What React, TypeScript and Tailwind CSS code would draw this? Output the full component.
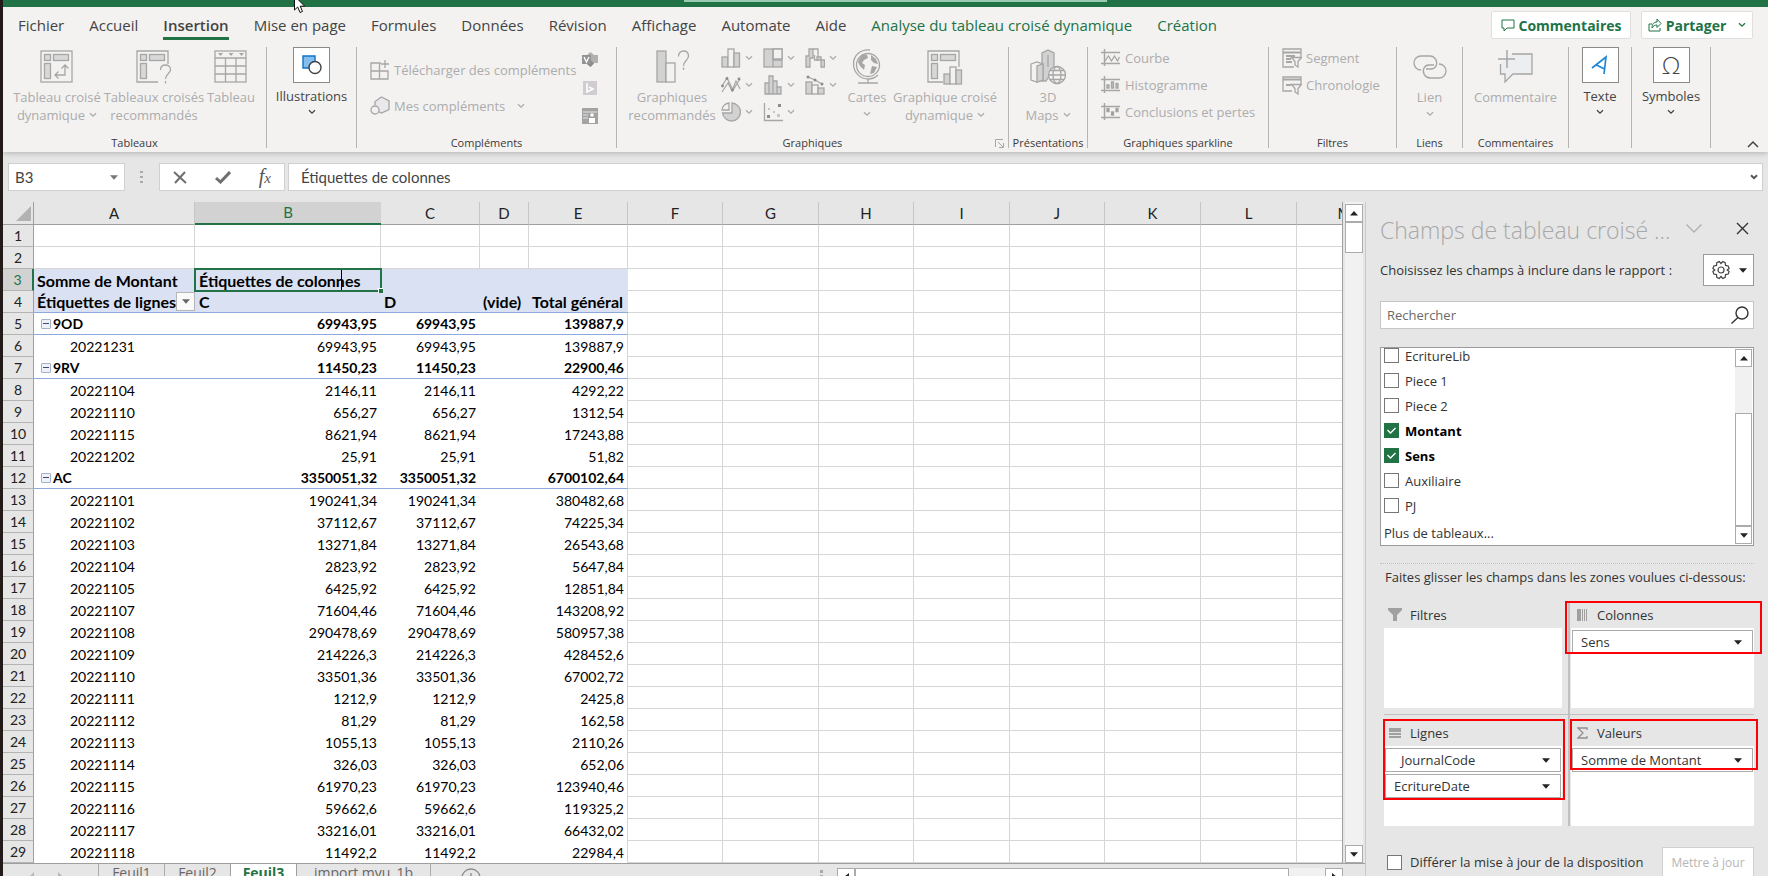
import React, { useState } from 'react';

interface PivotRow {
  label: string;
  values: string[];
  group?: boolean;
}

const tabs = [
  'Fichier', 'Accueil', 'Insertion', 'Mise en page', 'Formules', 'Données',
  'Révision', 'Affichage', 'Automate', 'Aide',
];

const contextTabs = ['Analyse du tableau croisé dynamique', 'Création'];

const columns = ['A', 'B', 'C', 'D', 'E', 'F', 'G', 'H', 'I', 'J', 'K', 'L', 'M'];
const emptyColumns = columns.slice(5);

const colWidths = [
  'w-[31px]', 'w-[161px]', 'w-[186px]', 'w-[99px]', 'w-[49px]', 'w-[99px]', 'w-[95px]',
  'w-[96px]', 'w-[95px]', 'w-[96px]', 'w-[95px]', 'w-[96px]', 'w-[96px]', 'w-[96px]',
];

const pivotRows: PivotRow[] = [
  { label: '9OD', values: ['69943,95', '69943,95', '', '139887,9'], group: true },
  { label: '20221231', values: ['69943,95', '69943,95', '', '139887,9'] },
  { label: '9RV', values: ['11450,23', '11450,23', '', '22900,46'], group: true },
  { label: '20221104', values: ['2146,11', '2146,11', '', '4292,22'] },
  { label: '20221110', values: ['656,27', '656,27', '', '1312,54'] },
  { label: '20221115', values: ['8621,94', '8621,94', '', '17243,88'] },
  { label: '20221202', values: ['25,91', '25,91', '', '51,82'] },
  { label: 'AC', values: ['3350051,32', '3350051,32', '', '6700102,64'], group: true },
  { label: '20221101', values: ['190241,34', '190241,34', '', '380482,68'] },
  { label: '20221102', values: ['37112,67', '37112,67', '', '74225,34'] },
  { label: '20221103', values: ['13271,84', '13271,84', '', '26543,68'] },
  { label: '20221104', values: ['2823,92', '2823,92', '', '5647,84'] },
  { label: '20221105', values: ['6425,92', '6425,92', '', '12851,84'] },
  { label: '20221107', values: ['71604,46', '71604,46', '', '143208,92'] },
  { label: '20221108', values: ['290478,69', '290478,69', '', '580957,38'] },
  { label: '20221109', values: ['214226,3', '214226,3', '', '428452,6'] },
  { label: '20221110', values: ['33501,36', '33501,36', '', '67002,72'] },
  { label: '20221111', values: ['1212,9', '1212,9', '', '2425,8'] },
  { label: '20221112', values: ['81,29', '81,29', '', '162,58'] },
  { label: '20221113', values: ['1055,13', '1055,13', '', '2110,26'] },
  { label: '20221114', values: ['326,03', '326,03', '', '652,06'] },
  { label: '20221115', values: ['61970,23', '61970,23', '', '123940,46'] },
  { label: '20221116', values: ['59662,6', '59662,6', '', '119325,2'] },
  { label: '20221117', values: ['33216,01', '33216,01', '', '66432,02'] },
  { label: '20221118', values: ['11492,2', '11492,2', '', '22984,4'] },
];

/* ---------- small glyphs ---------- */

const Chevron = ({ className = '' }: { className?: string }) => (
  <svg viewBox="0 0 8 6" className={`inline-block h-[6px] w-2 shrink-0 ${className}`} fill="none" stroke="currentColor" strokeWidth="1.3">
    <path d="M1 1.2 4 4.2 7 1.2" />
  </svg>
);

const Triangle = ({ up = false, className = '' }: { up?: boolean; className?: string }) => (
  <svg viewBox="0 0 8 5" className={`h-[5px] w-2 shrink-0 ${className}`} fill="currentColor">
    {up ? <path d="M4 0 8 4.5H0Z" /> : <path d="M0 .3h8L4 4.8Z" />}
  </svg>
);

/* ---------- ribbon icons ---------- */

const svgProps = { fill: 'none', stroke: '#a6a6a6', strokeWidth: 1.3 };

const PivotIcon = () => (
  <svg viewBox="0 0 34 34" className="h-[34px] w-[34px]" {...svgProps}>
    <rect x="1" y="1" width="31" height="31" />
    <rect x="4.500" y="4.500" width="6" height="6" fill="#d8d8d8" />
    <rect x="13.500" y="4.500" width="15" height="6" fill="#d8d8d8" />
    <rect x="4.500" y="13.500" width="6" height="15" fill="#d8d8d8" />
    <path d="M15 25h10V15M18.500 21.500 15 25l3.500 3.500M21.500 18.500 25 15l3.500 3.500" />
  </svg>
);

const PivotHelpIcon = () => (
  <svg viewBox="0 0 36 36" className="h-9 w-9" {...svgProps}>
    <path d="M22 33H1V2h31v13" />
    <rect x="4.500" y="5.500" width="6" height="6" fill="#d8d8d8" />
    <rect x="13.500" y="5.500" width="15" height="6" fill="#d8d8d8" />
    <rect x="4.500" y="14.500" width="6" height="15" fill="#d8d8d8" />
    <path d="M24.500 21c0-3 2-5 5-5s5 2 5 4.500c0 4-5 4.500-5 9.500M29.500 32v2.500" />
  </svg>
);

const TableIcon = () => (
  <svg viewBox="0 0 34 34" className="h-[34px] w-[34px]" {...svgProps}>
    <rect x="1" y="1" width="31" height="31" />
    <path d="M1 8h31M1 16h31M1 24h31M11.500 8v24M22 8v24" />
    <path d="M4 3h5L6.500 6ZM14.500 3h5L17 6ZM25 3h5l-2.500 3Z" fill="#a6a6a6" stroke="none" />
  </svg>
);

const ShapesIcon = () => (
  <svg viewBox="0 0 20 20" className="h-5 w-5" fill="none" strokeWidth="1.4">
    <path d="M1 1h12v5.500a6.500 6.500 0 0 0-6 6.500H1Z" fill="#83beec" stroke="#1073c6" />
    <circle cx="13" cy="12.500" r="6" fill="#fff" stroke="#444" />
  </svg>
);

const StoreIcon = () => (
  <svg viewBox="0 0 20 20" className="h-5 w-5 shrink-0" {...svgProps}>
    <path d="M11 3H1v16h17v-8H1M9.500 3v16M15 0v8M11 4h8" />
  </svg>
);

const MyAddinsIcon = () => (
  <svg viewBox="0 0 20 20" className="h-5 w-5 shrink-0" {...svgProps}>
    <path d="M5 9V5.500L11.500 1 19 5v8.500L11.500 17 9 15.800" fill="#e9e9ec" />
    <circle cx="5" cy="14" r="4" fill="#f3f2f1" />
  </svg>
);

const VisioIcon = () => (
  <svg viewBox="0 0 16 16" className="h-4 w-4">
    <path d="M8.500 0 12 3h4v8h-4l-3.500 4L5 12V3Z" fill="#b0b0b0" />
    <path d="M8.500 8 12 11.500 8.500 15 5 12Z" fill="#8b8b8b" />
    <rect y="3" width="9" height="9" fill="#939393" />
    <path d="M2 5l2.500 5L7 5" stroke="#fff" fill="none" strokeWidth="1.300" />
  </svg>
);

const BingIcon = () => (
  <svg viewBox="0 0 16 16" className="h-4 w-4">
    <rect x="1" y="1" width="14" height="14" fill="#d0ccd2" />
    <path d="M5 3v9l6-3-4-2" stroke="#fff" strokeWidth="1.600" fill="none" />
  </svg>
);

const PeopleIcon = () => (
  <svg viewBox="0 0 16 16" className="h-4 w-4">
    <rect width="16" height="16" fill="#a3a3a3" />
    <path d="M1 4h14M1 7h5M1 10h5" stroke="#e6e6e6" />
    <circle cx="10" cy="7" r="1.800" fill="#fff" />
    <path d="M7 10h6v5H7Z" fill="#fff" />
  </svg>
);

const ChartHelpIcon = () => (
  <svg viewBox="0 0 36 36" className="h-9 w-9" {...svgProps}>
    <rect x="3" y="2" width="9" height="31" fill="#d2d2d2" />
    <rect x="12" y="14" width="9" height="19" fill="#f3f2f1" />
    <path d="M24.500 7.500c0-3.500 2-5.500 5-5.500s5 2 5 5c0 4.500-5 4.500-5 10M29.500 18.500v2.500" />
  </svg>
);

const BarIcon = () => (
  <svg viewBox="0 0 20 20" className="h-5 w-5" {...svgProps}>
    <rect x="1" y="9" width="6" height="10" fill="#d2d2d2" />
    <rect x="7" y="1" width="6" height="18" fill="#f3f2f1" />
    <rect x="13" y="5" width="5.500" height="14" fill="#d2d2d2" />
  </svg>
);

const TreemapIcon = () => (
  <svg viewBox="0 0 20 20" className="h-5 w-5" {...svgProps}>
    <rect x="1" y="1" width="18" height="18" fill="#d2d2d2" />
    <path d="M10 1h9v10h-9Z" fill="#f3f2f1" />
    <path d="M10 1v18M10 12h9" />
  </svg>
);

const WaterfallIcon = () => (
  <svg viewBox="0 0 20 20" className="h-5 w-5" {...svgProps}>
    <path d="M1 19V8h3V1h4v9H5v9Z" fill="#d2d2d2" />
    <path d="M8 1h5v11H9.500V7" />
    <path d="M12 12h4v7h3.500v-7H16V9h-4Z" fill="#d2d2d2" />
  </svg>
);

const LineIcon = () => (
  <svg viewBox="0 0 20 20" className="h-5 w-5" {...svgProps}>
    <path d="M1 11 6 3l6 12 7-11M1 17l6-9 4 8 4-10 4 8" strokeWidth="1.200" />
    <g fill="#8c8c8c" stroke="none">
      <circle cx="1.500" cy="11" r="1.400" /><circle cx="6" cy="3.500" r="1.400" />
      <circle cx="11.500" cy="15" r="1.400" /><circle cx="18" cy="4" r="1.400" />
    </g>
  </svg>
);

const StatIcon = () => (
  <svg viewBox="0 0 20 20" className="h-5 w-5" {...svgProps} fill="#d2d2d2">
    <path d="M2 8h4v11H2ZM6 1h4v18H6ZM10 6h4v13h-4ZM14 12h4v7h-4Z" />
  </svg>
);

const ComboIcon = () => (
  <svg viewBox="0 0 20 20" className="h-5 w-5" {...svgProps}>
    <rect x="1" y="7" width="6" height="12" fill="#d2d2d2" />
    <rect x="7" y="10" width="6" height="9" fill="#f3f2f1" />
    <rect x="13" y="13" width="6" height="6" fill="#d2d2d2" />
    <path d="M3 2 10 5l7 4" />
    <g fill="#8c8c8c" stroke="none"><circle cx="3" cy="2" r="1.500" /><circle cx="10" cy="5" r="1.500" /><circle cx="17" cy="9" r="1.500" /></g>
  </svg>
);

const PieIcon = () => (
  <svg viewBox="0 0 20 20" className="h-5 w-5" {...svgProps}>
    <path d="M11 1a9 9 0 1 1-9.500 10H11Z" fill="#d2d2d2" />
    <path d="M8 1v7H1a8 8 0 0 1 7-7Z" fill="#f3f2f1" />
  </svg>
);

const ScatterIcon = () => (
  <svg viewBox="0 0 20 20" className="h-5 w-5" {...svgProps}>
    <path d="M1.500 1v17.500H20" />
    <g fill="#8c8c8c" stroke="none"><rect x="4" y="13" width="3" height="3" /><rect x="15" y="2" width="3" height="3" /></g>
    <g fill="#c4c4c4" stroke="none"><rect x="5" y="6" width="2" height="2" /><rect x="10" y="9" width="2" height="2" /><rect x="14" y="12" width="3" height="3" /></g>
  </svg>
);

const GlobeIcon = () => (
  <svg viewBox="0 0 30 36" className="h-9 w-[30px]" {...svgProps}>
    <circle cx="16" cy="16" r="11.500" />
    <path d="M18 1C9 0 1.500 6 1.500 15S9 30 16 30c4 0 8-2 10-4M16 30v4M6 34h20" />
    <path d="M7 10l4-5 4 1 1 3-4 2-2 3 3 2-1 5-4-4-2-4ZM19 6l5 4 2 5-4-1-3-3ZM20 17l5 1-3 6-4 1Z" fill="#a6a6a6" stroke="none" />
  </svg>
);

const PivotChartIcon = () => (
  <svg viewBox="0 0 36 36" className="h-9 w-9" {...svgProps}>
    <path d="M16 33H1V2h31v16" />
    <rect x="4.500" y="5.500" width="6" height="6" fill="#d8d8d8" />
    <rect x="13.500" y="5.500" width="15" height="6" fill="#d8d8d8" />
    <rect x="4.500" y="14.500" width="6" height="15" fill="#d8d8d8" />
    <rect x="17" y="25" width="6" height="10" fill="#d2d2d2" />
    <rect x="23" y="18" width="6" height="17" fill="#f3f2f1" />
    <rect x="29" y="21" width="5.500" height="14" fill="#d2d2d2" />
  </svg>
);

const MapsIcon = () => (
  <svg viewBox="0 0 36 36" className="h-9 w-9" {...svgProps}>
    <path d="M12 32V4l6-3 6 3v15l-8 13Z" fill="#d2d2d2" />
    <path d="M1 15l6-2 6 2v16l-6 2-6-2Z" fill="#f3f2f1" />
    <path d="M7 17v16l6-2V15ZM18 6v12" fill="#d2d2d2" />
    <circle cx="27" cy="26" r="8.500" fill="#f3f2f1" />
    <ellipse cx="27" cy="26" rx="4" ry="8.500" />
    <path d="M18.500 26h17M20 21.500h14M20 30.500h14" />
  </svg>
);

const SparkIcon = ({ kind }: { kind: string }) => (
  <svg viewBox="0 0 20 18" className="h-[18px] w-5 shrink-0" {...svgProps}>
    <path d="M3.500 0v17M0 3.500h19M0 14.500h19" strokeWidth="1.500" />
    {kind === 'line' && <path d="M4 12l3.500-5 3 5 3-5 3 5 2-4" />}
    {kind === 'column' && <path d="M6 9h2v3H6ZM10.500 6h2v6h-2ZM15 7.500h2V12h-2Z" fill="#bdbdbd" />}
    {kind === 'winloss' && <path d="M6 5.500h2v3H6ZM10.500 9h2v3h-2ZM15 5.500h2v3h-2Z" fill="#8c8c8c" />}
  </svg>
);

const SlicerIcon = ({ timeline = false }: { timeline?: boolean }) => (
  <svg viewBox="0 0 20 20" className="h-5 w-5 shrink-0" {...svgProps}>
    <path d={timeline ? 'M10 16H1V2h18v7' : 'M12 19H1V1h18v8'} />
    <path d={timeline ? 'M1 4.500h18M4 10h5' : 'M1 4.500h18M4 8h9M4 11h5M4 14h6'} strokeWidth="2" />
    <path d="M9.500 9.500h10L16 13.500V19l-3-2v-3.500Z" fill="#f3f2f1" />
  </svg>
);

const LinkIcon = () => (
  <svg viewBox="0 0 34 26" className="h-[26px] w-[34px]" {...svgProps}>
    <path d="M8 16a7 7 0 0 1 0-14h9a7 7 0 0 1 6 10c-1 2-2.500 3-5 3h-5" />
    <path d="M26 10a7 7 0 0 1 0 14h-9a7 7 0 0 1-6-10c1-2 3-3 5-3h5" />
  </svg>
);

const CommentIcon = () => (
  <svg viewBox="0 0 36 34" className="h-[34px] w-9" {...svgProps}>
    <path d="M14 4h20v20H15l-8 8v-8H2.500V14" fill="#eceef0" />
    <path d="M9 0v18M0 9h17" strokeWidth="1.500" />
  </svg>
);

/* ---------- ribbon parts ---------- */

interface GroupProps {
  label?: string;
  className: string;
  bodyClassName?: string;
  children: React.ReactNode;
}

const Group = ({ label, className, bodyClassName = '', children }: GroupProps) => (
  <div className={`flex h-[101px] shrink-0 flex-col border-r border-[#b5b5b5] ${className}`}>
    <div className={`flex flex-1 ${bodyClassName}`}>{children}</div>
    {label && <div className="whitespace-nowrap pb-px text-center text-[11px] leading-[8px] text-[#3b3a39]">{label}</div>}
  </div>
);

interface BigButtonProps {
  icon: React.ReactNode;
  lines: string[];
  className: string;
  menu?: 'inline' | 'below';
}

const BigButton = ({ icon, lines, className, menu }: BigButtonProps) => (
  <button className={`flex flex-col items-center text-[13px] leading-[18px] text-[#acacac] ${className}`}>
    <span className="mb-[3px] mt-[2px] flex h-9 items-center justify-center">{icon}</span>
    {lines.map((line, i) => (
      <span key={line} className="whitespace-nowrap">
        {line}
        {menu === 'inline' && i === lines.length - 1 && <Chevron className="mb-1 ml-1" />}
      </span>
    ))}
    {menu === 'below' && <Chevron className="mt-[5px]" />}
  </button>
);

const BoxButton = ({ icon, label }: { icon: React.ReactNode; label: string }) => (
  <button className="flex flex-1 flex-col items-center text-[13px] leading-[18px] text-[#444]">
    <span className="mb-1 flex h-9 w-[37px] items-center justify-center border border-[#8a8a8a] bg-white">{icon}</span>
    <span>{label}</span>
    <Chevron className="mt-1" />
  </button>
);

const SmallButton = ({ icon, label, menu = false }: { icon: React.ReactNode; label?: string; menu?: boolean }) => (
  <button aria-label={label ?? 'Graphique'} className="flex items-center gap-1 whitespace-nowrap text-[13px] leading-[18px] text-[#acacac]">
    {icon}
    {label}
    {menu && <Chevron className={label ? 'ml-2' : ''} />}
  </button>
);

const Ribbon = () => (
  <header className="shrink-0 bg-[#f3f2f1] shadow-[0_2px_5px_#bdbdbd]">
    <nav className="flex h-10 items-start pl-[15px] pr-[15px]">
      <div className="flex flex-1 gap-[25px] pt-1 text-[15px] leading-[28px] text-[#444]">
        {tabs.map((tab) => (
          <a
            key={tab}
            href="#"
            className={`h-[29px] whitespace-nowrap ${tab === 'Insertion' ? 'border-b-3 border-[#217346] font-semibold' : ''}`}
          >
            {tab}
          </a>
        ))}
        {contextTabs.map((tab) => (
          <a key={tab} href="#" className="whitespace-nowrap text-[#217346]">{tab}</a>
        ))}
      </div>
      <div className="flex gap-[10px] pt-1 text-[14px] font-bold text-[#217346]">
        <button className="flex h-7 w-[140px] items-center justify-center gap-1 rounded-xs border border-[#e1dfdd] bg-white">
          <svg viewBox="0 0 14 13" className="h-[13px] w-[14px]" fill="none" stroke="currentColor">
            <path d="M1 1h12v8H6l-3 3V9H1Z" />
          </svg>
          Commentaires
        </button>
        <button className="flex h-7 w-[112px] items-center justify-center gap-1 rounded-xs border border-[#e1dfdd] bg-white">
          <svg viewBox="0 0 14 14" className="h-[14px] w-[14px]" fill="none" stroke="currentColor">
            <path d="M4 6H1v7h11v-3M4 10c0-4 2-6 5-6V1l4 4.500-4 4V7C7 7 5 8 4 10Z" />
          </svg>
          Partager
          <Chevron className="ml-2" />
        </button>
      </div>
    </nav>

    <div className="flex h-[105px] items-start">
      <Group label="Tableaux" className="w-[264px]" bodyClassName="pl-2 pr-[9px]">
        <BigButton icon={<PivotIcon />} lines={['Tableau croisé', 'dynamique']} menu="inline" className="w-[92px]" />
        <BigButton icon={<PivotHelpIcon />} lines={['Tableaux croisés', 'recommandés']} className="w-[102px]" />
        <BigButton icon={<TableIcon />} lines={['Tableau']} className="w-[52px]" />
      </Group>
      <Group className="w-[90px]">
        <BoxButton icon={<ShapesIcon />} label="Illustrations" />
      </Group>
      <Group label="Compléments" className="w-[260px]" bodyClassName="pl-[13px]">
        <div className="flex flex-1 flex-col gap-[16px] pt-[13px]">
          <SmallButton icon={<StoreIcon />} label="Télécharger des compléments" />
          <SmallButton icon={<MyAddinsIcon />} label="Mes compléments" menu />
        </div>
        <div className="flex w-[34px] flex-col gap-3 pt-[5px]">
          <button aria-label="Visio"><VisioIcon /></button>
          <button aria-label="Bing"><BingIcon /></button>
          <button aria-label="People Graph"><PeopleIcon /></button>
        </div>
      </Group>
      <Group label="Graphiques" className="relative w-[392px]" bodyClassName="pl-[11px]">
        <BigButton icon={<ChartHelpIcon />} lines={['Graphiques', 'recommandés']} className="w-[88px]" />
        <div className="ml-[5px] grid h-20 w-[126px] shrink-0 grid-cols-3 content-start gap-y-[7px] pt-px">
          <SmallButton icon={<BarIcon />} menu />
          <SmallButton icon={<TreemapIcon />} menu />
          <SmallButton icon={<WaterfallIcon />} menu />
          <SmallButton icon={<LineIcon />} menu />
          <SmallButton icon={<StatIcon />} menu />
          <SmallButton icon={<ComboIcon />} menu />
          <SmallButton icon={<PieIcon />} menu />
          <SmallButton icon={<ScatterIcon />} menu />
        </div>
        <BigButton icon={<GlobeIcon />} lines={['Cartes']} menu="below" className="w-10" />
        <BigButton icon={<PivotChartIcon />} lines={['Graphique croisé', 'dynamique']} menu="inline" className="w-[116px]" />
        <button aria-label="Options de graphique" className="absolute bottom-0 right-1">
          <svg viewBox="0 0 9 9" className="h-[9px] w-[9px]" {...svgProps}>
            <path d="M.5 8V.5H8M3 3l5 5M8.500 4v4.500H4" strokeWidth="1" />
          </svg>
        </button>
      </Group>
      <Group label="Présentations" className="w-[79px]">
        <BigButton icon={<MapsIcon />} lines={['3D', 'Maps']} menu="inline" className="flex-1" />
      </Group>
      <Group label="Graphiques sparkline" className="w-[181px]">
        <div className="flex flex-col gap-[9px] pl-[13px] pt-[2px]">
          <SmallButton icon={<SparkIcon kind="line" />} label="Courbe" />
          <SmallButton icon={<SparkIcon kind="column" />} label="Histogramme" />
          <SmallButton icon={<SparkIcon kind="winloss" />} label="Conclusions et pertes" />
        </div>
      </Group>
      <Group label="Filtres" className="w-32">
        <div className="flex flex-col gap-[7px] pl-[13px] pt-px">
          <SmallButton icon={<SlicerIcon />} label="Segment" />
          <SmallButton icon={<SlicerIcon timeline />} label="Chronologie" />
        </div>
      </Group>
      <Group label="Liens" className="w-[66px]">
        <BigButton icon={<LinkIcon />} lines={['Lien']} menu="below" className="flex-1" />
      </Group>
      <Group label="Commentaires" className="w-[106px]">
        <BigButton icon={<CommentIcon />} lines={['Commentaire']} className="flex-1" />
      </Group>
      <Group className="w-[63px]">
        <BoxButton
          label="Texte"
          icon={
            <svg viewBox="0 0 18 20" className="h-5 w-[18px]" fill="none" stroke="#1e88d8" strokeWidth="1.700">
              <path d="M1 13 15 2l-2 17M5.500 10l8 4" />
            </svg>
          }
        />
      </Group>
      <Group className="w-[79px]">
        <BoxButton label="Symboles" icon={<span className="text-[24px] font-light leading-none">Ω</span>} />
      </Group>
      <button aria-label="Réduire le ruban" className="ml-auto mr-[9px] self-end pb-1">
        <svg viewBox="0 0 12 8" className="h-2 w-3" fill="none" stroke="#444" strokeWidth="1.500">
          <path d="M1 7 6 2l5 5" />
        </svg>
      </button>
    </div>
  </header>
);

const FormulaBar = () => {
  const [formula, setFormula] = useState('Étiquettes de colonnes');

  return (
    <div className="flex h-[50px] shrink-0 items-center pl-[5px] pr-[5px] font-[Lato,sans-serif] text-[15px] text-[#444]">
      <div className="flex h-7 w-[117px] items-center border border-[#d0d0d0] bg-white pl-[6px] pr-[6px]">
        <input aria-label="Zone Nom" defaultValue="B3" className="w-0 flex-1 outline-none" />
        <Triangle className="text-[#777]" />
      </div>
      <svg viewBox="0 0 4 14" className="mx-[15px] h-[14px] w-1" fill="#aaa">
        <path d="M0 1h3v2H0ZM0 6h3v2H0ZM0 11h3v2H0Z" />
      </svg>
      <div className="flex h-7 w-[126px] items-center justify-between border border-[#d0d0d0] bg-white px-[13px]">
        <button aria-label="Annuler">
          <svg viewBox="0 0 14 13" className="h-[13px] w-[14px]" fill="none" stroke="#6f6f6f" strokeWidth="2">
            <path d="M1 1l12 11M12 1 2 12" />
          </svg>
        </button>
        <button aria-label="Entrer">
          <svg viewBox="0 0 16 13" className="h-[13px] w-4" fill="none" stroke="#6f6f6f" strokeWidth="3">
            <path d="M1 7l4.500 4L15 1" />
          </svg>
        </button>
        <button aria-label="Insérer une fonction" className="font-['Liberation_Serif',serif] text-[20px] italic leading-5 text-[#555]">
          f<span className="text-[15px]">x</span>
        </button>
      </div>
      <div className="ml-[3px] flex h-7 flex-1 items-center border border-[#d0d0d0] bg-white pl-3 pr-1">
        <input
          aria-label="Barre de formule"
          value={formula}
          onChange={(e) => setFormula(e.target.value)}
          className="w-0 flex-1 outline-none"
        />
        <Chevron className="stroke-2 text-[#555]" />
      </div>
    </div>
  );
};

/* ---------- sheet ---------- */

const RowHeader = ({ n }: { n: number }) => (
  <th
    scope="row"
    className={`border-b border-[#b4b4b4] text-[14px] font-normal ${
      n === 3 ? 'border-r-2 border-r-[#217346] bg-[#d2d2d2] text-[#217346]' : 'border-r border-r-[#9f9f9f] bg-[#e6e6e6] text-[#222]'
    }`}
  >
    {n}
  </th>
);

const EmptyCells = ({ names }: { names: string[] }) => (
  <>
    {names.map((name) => (
      <td key={name} className="border-b border-r border-[#d6d6d6]" />
    ))}
  </>
);

const Sheet = () => (
  <div className="min-w-0 flex-1 overflow-hidden border-r border-[#9f9f9f] bg-white">
    <table className="w-[1390px] table-fixed border-separate border-spacing-0 font-[Lato,sans-serif] text-[14px] leading-[21px] text-black">
      <colgroup>
        {colWidths.map((width, i) => (
          <col key={i} className={width} />
        ))}
      </colgroup>
      <thead>
        <tr className="h-[22px] text-[15px]">
          <th className="border-b border-r border-[#9f9f9f] bg-[#e6e6e6]">
            <svg viewBox="0 0 16 16" className="ml-auto mr-[2px] h-[15px] w-[15px]" fill="#b2b2b2">
              <path d="M16 0v16H0Z" />
            </svg>
          </th>
          {columns.map((name) => (
            <th
              key={name}
              scope="col"
              className={`font-normal ${
                name === 'B'
                  ? 'border-b-2 border-b-[#217346] bg-[#d2d2d2] text-[#217346]'
                  : 'border-b border-r border-b-[#9f9f9f] border-r-[#c6c6c6] bg-[#e6e6e6] text-[#222]'
              }`}
            >
              {name}
            </th>
          ))}
        </tr>
      </thead>
      <tbody>
        {[1, 2].map((n) => (
          <tr key={n} className="h-[22px]">
            <RowHeader n={n} />
            <EmptyCells names={columns} />
          </tr>
        ))}
        <tr className="h-[22px] text-[16px] font-bold">
          <RowHeader n={3} />
          <td className="whitespace-nowrap bg-[#d9e1f2] pl-[3px]">Somme de Montant</td>
          <td className="relative whitespace-nowrap bg-[#d9e1f2] pl-1">
            Étiquettes de colonnes
            {/* active cell frame and its fill handle */}
            <span className="absolute -inset-px border-2 border-[#217346]" />
            <span className="absolute -bottom-[2px] -right-[2px] h-[5px] w-[5px] border-l border-t border-white bg-[#217346]" />
            <span className="absolute left-[146px] top-[1px] h-5 w-px bg-black" />
          </td>
          <td className="bg-[#d9e1f2]" />
          <td className="bg-[#d9e1f2]" />
          <td className="bg-[#d9e1f2]" />
          <EmptyCells names={emptyColumns} />
        </tr>
        <tr className="h-[22px] text-[16px] font-bold">
          <RowHeader n={4} />
          <td className="border-b border-[#8ea9db] bg-[#d9e1f2] pl-[3px]">
            <div className="flex items-center justify-between whitespace-nowrap">
              Étiquettes de lignes
              <button aria-label="Filtrer" className="flex h-[19px] w-[19px] shrink-0 items-center justify-center border border-[#b5b5b5] bg-[#fafafa]">
                <Triangle className="text-[#666]" />
              </button>
            </div>
          </td>
          <td className="border-b border-[#8ea9db] bg-[#d9e1f2] pl-1">C</td>
          <td className="border-b border-[#8ea9db] bg-[#d9e1f2] pl-[3px]">D</td>
          <td className="border-b border-[#8ea9db] bg-[#d9e1f2] pl-[3px]">(vide)</td>
          <td className="whitespace-nowrap border-b border-[#8ea9db] bg-[#d9e1f2] pl-[3px]">Total général</td>
          <EmptyCells names={emptyColumns} />
        </tr>
        {pivotRows.map((row, i) => (
          <tr key={i} className={`h-[22px] ${row.group ? 'font-bold' : ''}`}>
            <RowHeader n={i + 5} />
            <td className={row.group ? 'border-b border-[#8ea9db] pl-[7px]' : 'pl-9'}>
              {row.group ? (
                <div className="flex items-center gap-[2px]">
                  <button aria-label={`Réduire ${row.label}`} className="flex h-[10px] w-[10px] items-center justify-center rounded-[1px] border border-[#a5b1c4] bg-[#eef2f8]">
                    <span className="h-px w-[6px] bg-[#3c4f73]" />
                  </button>
                  {row.label}
                </div>
              ) : (
                row.label
              )}
            </td>
            {row.values.map((value, j) => (
              <td
                key={j}
                className={`text-right ${row.group ? 'border-b border-[#8ea9db]' : ''} ${
                  j === 3 ? 'border-r border-r-[#d6d6d6] pr-[3px]' : 'pr-1'
                }`}
              >
                {value}
              </td>
            ))}
            <EmptyCells names={emptyColumns} />
          </tr>
        ))}
      </tbody>
    </table>
  </div>
);

const ScrollButton = ({ up = false }: { up?: boolean }) => (
  <button
    aria-label={up ? 'Défiler vers le haut' : 'Défiler vers le bas'}
    className="flex h-[18px] w-full shrink-0 items-center justify-center border border-[#ababab] bg-white text-[#222]"
  >
    <Triangle up={up} />
  </button>
);

const SheetTabs = () => (
  <div className="flex h-[30px] shrink-0 items-start border-t border-[#9f9f9f] text-[14px] leading-[18px] text-[#666]">
    <div className="flex w-[95px] gap-6 pl-[26px] pt-2">
      <svg viewBox="0 0 5 10" className="h-[10px] w-[5px]" fill="#b8b8b8"><path d="M5 0v10L0 5Z" /></svg>
      <svg viewBox="0 0 5 10" className="h-[10px] w-[5px]" fill="#b8b8b8"><path d="M0 0v10l5-5Z" /></svg>
    </div>
    <div className="flex">
      <button className="w-[66px] border-l border-[#ababab]">Feuil1</button>
      <button className="w-[66px] border-l border-[#ababab]">Feuil2</button>
      <button className="w-[67px] border-x border-[#9f9f9f] bg-white font-bold text-[#217346]">Feuil3</button>
      <button className="w-[134px] border-r border-[#ababab]">import mvu_1b</button>
    </div>
    <button aria-label="Nouvelle feuille" className="ml-[30px] mt-1">
      <svg viewBox="0 0 20 20" className="h-5 w-5" fill="none" stroke="#8a8a8a" strokeWidth="1.300">
        <circle cx="10" cy="10" r="9" />
        <path d="M10 5v10M5 10h10" />
      </svg>
    </button>
    <div className="ml-auto mr-[22px] flex w-[523px] gap-[14px] pt-1">
      <svg viewBox="0 0 3 12" className="mt-[2px] h-3 w-[3px]" fill="#aaa"><path d="M0 0h3v3H0ZM0 5h3v3H0Z" /></svg>
      <div className="flex h-[17px] flex-1">
        <button aria-label="Défiler à gauche" className="flex w-[18px] items-center justify-center border border-[#ababab] bg-white">
          <svg viewBox="0 0 5 8" className="h-2 w-[5px]" fill="#222"><path d="M5 0v8L0 4Z" /></svg>
        </button>
        <div className="flex flex-1 bg-[#f1f1f1] pr-9">
          <div className="flex-1 border border-[#ababab] bg-white" />
        </div>
        <button aria-label="Défiler à droite" className="flex w-[18px] items-center justify-center border border-[#ababab] bg-white">
          <svg viewBox="0 0 5 8" className="h-2 w-[5px]" fill="#222"><path d="M0 0v8l5-4Z" /></svg>
        </button>
      </div>
    </div>
  </div>
);

/* ---------- pivot field pane ---------- */

const fields = [
  { name: 'EcritureLib', checked: false },
  { name: 'Piece 1', checked: false },
  { name: 'Piece 2', checked: false },
  { name: 'Montant', checked: true },
  { name: 'Sens', checked: true },
  { name: 'Auxiliaire', checked: false },
  { name: 'PJ', checked: false },
];

const CheckBox = ({ checked, onChange }: { checked: boolean; onChange: () => void }) => (
  <span className="relative flex h-[15px] w-[15px] shrink-0">
    <input
      type="checkbox"
      checked={checked}
      onChange={onChange}
      className="h-[15px] w-[15px] appearance-none border border-[#767676] bg-white checked:border-[#217346] checked:bg-[#217346]"
    />
    {checked && (
      <svg viewBox="0 0 15 15" className="pointer-events-none absolute inset-0" fill="none" stroke="#fff" strokeWidth="1.400">
        <path d="M3.500 7l3 3 5-5" />
      </svg>
    )}
  </span>
);

const Area = ({ icon, title, items, mark }: { icon: React.ReactNode; title: string; items: string[]; mark?: string }) => (
  <section className="relative">
    <h3 className="flex h-[27px] items-center gap-[7px] pl-[3px]">
      <span className="flex w-4 justify-center">{icon}</span>
      {title}
    </h3>
    <div className="flex h-20 flex-col gap-[2px] bg-white px-px pt-[2px]">
      {items.map((item) => (
        <button key={item} className={`flex h-6 items-center justify-between border border-[#ababab] bg-white pr-[10px] ${item === 'JournalCode' ? 'pl-[15px]' : 'pl-2'}`}>
          {item}
          <Triangle className="text-[#222]" />
        </button>
      ))}
    </div>
    {mark && <span className={`pointer-events-none absolute border-2 border-[#fb0007] ${mark}`} />}
  </section>
);

const FieldPane = () => {
  const [checks, setChecks] = useState(fields.map((f) => f.checked));
  const [defer, setDefer] = useState(false);

  const toggle = (index: number) => {
    setChecks(checks.map((c, i) => (i === index ? !c : c)));
  };

  return (
    <aside className="flex w-[403px] shrink-0 flex-col border-l border-[#c9c9c9] pl-[14px] pr-[14px] text-[13px] leading-[18px] text-[#333]">
      <div className="flex h-[52px] shrink-0 items-center">
        <h2 className="flex-1 whitespace-nowrap pt-1 text-[23px] font-light leading-8 text-[#a8a8a8]">Champs de tableau croisé ...</h2>
        <svg viewBox="0 0 16 9" className="mr-[34px] h-[9px] w-4" fill="none" stroke="#b0b0b0" strokeWidth="1.300">
          <path d="M.5.500 8 8 15.500.500" />
        </svg>
        <button aria-label="Fermer" className="mr-[5px]">
          <svg viewBox="0 0 13 13" className="h-[13px] w-[13px]" fill="none" stroke="#333" strokeWidth="1.400">
            <path d="M1 1l11 11M12 1 1 12" />
          </svg>
        </button>
      </div>

      <div className="flex shrink-0 items-center justify-between">
        <p className="whitespace-nowrap">Choisissez les champs à inclure dans le rapport :</p>
        <button aria-label="Outils" className="flex h-8 w-[51px] items-center justify-center gap-2 border border-[#9b9b9b] bg-white">
          <svg viewBox="0 0 20 20" className="h-5 w-5" fill="none" stroke="#444" strokeWidth="1.200">
            <circle cx="10" cy="10" r="3" />
            <path d="M8.200 1.500 10 3.500l1.800-2 2.400 1.200.3 2.700 2.700.6.9 2.500-1.900 1.500 1.900 1.500-.9 2.500-2.700.6-.3 2.700-2.400 1.200-1.800-2-1.800 2-2.400-1.200-.3-2.700-2.700-.6-.9-2.500L3.800 10 1.900 8.500l.9-2.500 2.700-.6.3-2.700Z" />
          </svg>
          <Triangle className="text-[#222]" />
        </button>
      </div>

      <div className="mt-[15px] flex h-7 shrink-0 items-center border border-[#c6c6c6] bg-white pl-[6px] pr-1">
        <input aria-label="Rechercher" placeholder="Rechercher" className="w-0 flex-1 outline-none placeholder:text-[#6a6a6a]" />
        <svg viewBox="0 0 18 18" className="h-[18px] w-[18px]" fill="none" stroke="#333" strokeWidth="1.400">
          <circle cx="11" cy="7" r="6" />
          <path d="M7 11.500.500 17.500" />
        </svg>
      </div>

      <div className="mt-[18px] flex h-[199px] shrink-0 overflow-hidden border border-[#9b9b9b] bg-white p-px">
        <div className="-mt-[6px] flex flex-1 flex-col pl-[2px]">
          {fields.map((field, i) => (
            <label key={field.name} className={`flex h-[25px] shrink-0 items-center gap-[6px] ${checks[i] ? 'font-bold text-black' : ''}`}>
              <CheckBox checked={checks[i]} onChange={() => toggle(i)} />
              {field.name}
            </label>
          ))}
          <a href="#" className="mt-[6px]">Plus de tableaux...</a>
        </div>
        <div className="flex w-[17px] flex-col bg-[#f1f1f1]">
          <ScrollButton up />
          <div className="mt-[46px] flex-1 border border-[#ababab] bg-white" />
          <ScrollButton />
        </div>
      </div>

      <div className="mt-[17px] shrink-0 border-t border-dotted border-[#c0c0c0]" />
      <p className="mt-1 shrink-0 whitespace-nowrap pl-[5px]">Faites glisser les champs dans les zones voulues ci-dessous:</p>

      <div className="ml-1 mt-[15px] grid shrink-0 grid-cols-[186px_1fr]">
        <div className="border-b border-r-2 border-[#c0c0c0] pb-[6px] pr-[6px]">
          <Area
            title="Filtres"
            items={[]}
            icon={
              <svg viewBox="0 0 14 13" className="h-[13px] w-[14px]" fill="#a0a0a0">
                <path d="M0 0h14v2L9 7v6H5V7L0 2Z" />
              </svg>
            }
          />
        </div>
        <div className="border-b border-[#c0c0c0] pb-[6px] pl-px">
          <Area
            title="Colonnes"
            items={['Sens']}
            mark="-left-[6px] -right-2 top-0 h-[53px]"
            icon={
              <svg viewBox="0 0 10 12" className="h-3 w-[10px]" fill="#a0a0a0">
                <path d="M0 0h4v12H0ZM5 0h1v12H5ZM7 0h1v12H7ZM9 0h1v12H9Z" />
              </svg>
            }
          />
        </div>
        <div className="border-r-2 border-[#c0c0c0] pr-[6px] pt-1">
          <Area
            title="Lignes"
            items={['JournalCode', 'EcritureDate']}
            mark="-left-px -right-[3px] top-0 h-[81px]"
            icon={
              <svg viewBox="0 0 12 10" className="h-[10px] w-3" fill="#a0a0a0">
                <path d="M0 0h12v4H0ZM0 5h12v2H0ZM0 8h12v2H0Z" />
              </svg>
            }
          />
        </div>
        <div className="pl-px pt-1">
          <Area
            title="Valeurs"
            items={['Somme de Montant']}
            mark="-left-px -right-1 top-0 h-[51px]"
            icon={
              <svg viewBox="0 0 11 12" className="h-3 w-[11px]" fill="none" stroke="#909090" strokeWidth="1.300">
                <path d="M10 3V1H1l5 5-5 5h9V9" />
              </svg>
            }
          />
        </div>
      </div>

      <div className="mt-[21px] flex shrink-0 items-start justify-between pl-[7px]">
        <label className="flex items-center gap-2 whitespace-nowrap pt-[6px]">
          <CheckBox checked={defer} onChange={() => setDefer(!defer)} />
          Différer la mise à jour de la disposition
        </label>
        <button disabled className="h-8 w-[92px] shrink-0 whitespace-nowrap border border-[#d0d0d0] bg-white text-[12px] text-[#b5b5b5]">Mettre à jour</button>
      </div>
    </aside>
  );
};

const App = () => {
  return (
    <div className="flex h-screen flex-col overflow-hidden border-l-3 border-[#231a1a] bg-[#e6e6e6] font-['Open_Sans',sans-serif]">
      {/* Bottom edge of the title bar, with the search box just above */}
      <div className="relative flex h-[7px] shrink-0 justify-center bg-[#217346]">
        <div className="mr-[-20px] h-[2px] w-[423px] bg-[#9bcbb0]" />
        <svg viewBox="0 0 12 15" className="absolute left-[291px] top-[-1px] z-10 h-[15px] w-3">
          <path d="M.5-3v14l3.200-3 2.300 5.500 2.500-1-2.300-5.300h4.500Z" fill="#fff" stroke="#111" />
        </svg>
      </div>
      <Ribbon />
      <FormulaBar />
      <div className="flex min-h-0 flex-1">
        <main className="flex min-w-0 flex-1 flex-col">
          <div className="flex shrink-0">
            <Sheet />
            <div className="ml-[2px] mr-[2px] flex w-[18px] shrink-0 flex-col bg-[#f1f1f1] pt-[2px]">
              <ScrollButton up />
              <div className="h-[31px] border border-[#ababab] bg-white" />
              <div className="flex-1" />
              <ScrollButton />
            </div>
          </div>
          <SheetTabs />
        </main>
        <FieldPane />
      </div>
    </div>
  );
};

export default App;
